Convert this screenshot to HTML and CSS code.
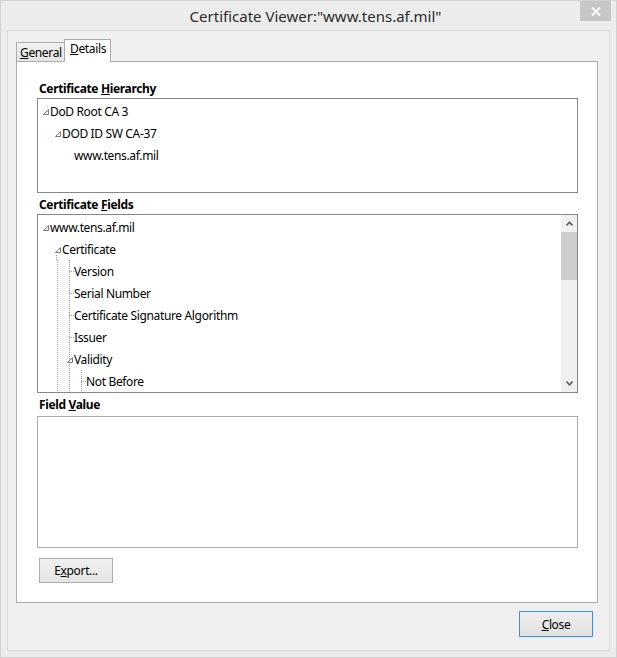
FILE: index.html
```html
<!DOCTYPE html>
<html>
<head>
<meta charset="utf-8">
<link rel="stylesheet" href="styles.css">
</head>
<body>
<div class="window">
  <div class="titlebar">
    <div class="title">Certificate Viewer:"www.tens.af.mil"</div>
    <div class="caption">
      <div class="close-x">
        <svg width="10" height="9" viewBox="0 0 10 9"><path d="M1 0.5 L9 8.5 M9 0.5 L1 8.5" stroke="#fff" stroke-width="1.8" fill="none"/></svg>
      </div>
    </div>
  </div>
  <div class="client">
    <div class="tabs">
      <div class="tab tab-general"><u>G</u>eneral</div>
      <div class="tab tab-details"><u>D</u>etails</div>
    </div>
    <div class="panel">
      <div class="label lbl-h">Certificate <u>H</u>ierarchy</div>
      <div class="box box-h">
        <div class="row"><span class="cell"><svg class="tri" width="6" height="6" viewBox="0 0 6 6"><path d="M0.5 5.5 L5.5 5.5 L5.5 0.5 Z" fill="#fff" stroke="#7a7a7a" stroke-width="1"/></svg></span><span class="txt">DoD Root CA 3</span></div>
        <div class="row"><span class="cell"></span><span class="cell"><svg class="tri" width="6" height="6" viewBox="0 0 6 6"><path d="M0.5 5.5 L5.5 5.5 L5.5 0.5 Z" fill="#fff" stroke="#7a7a7a" stroke-width="1"/></svg></span><span class="txt">DOD ID SW CA-37</span></div>
        <div class="row"><span class="cell"></span><span class="cell"></span><span class="cell"></span><span class="txt">www.tens.af.mil</span></div>
      </div>
      <div class="label lbl-f">Certificate <u>F</u>ields</div>
      <div class="box box-f">
        <div class="tree">
          <div class="row"><span class="cell"><svg class="tri" width="6" height="6" viewBox="0 0 6 6"><path d="M0.5 5.5 L5.5 5.5 L5.5 0.5 Z" fill="#fff" stroke="#7a7a7a" stroke-width="1"/></svg></span><span class="txt">www.tens.af.mil</span></div>
          <div class="row"><span class="cell"></span><span class="cell ln-low"><svg class="tri" width="6" height="6" viewBox="0 0 6 6"><path d="M0.5 5.5 L5.5 5.5 L5.5 0.5 Z" fill="#fff" stroke="#7a7a7a" stroke-width="1"/></svg></span><span class="txt">Certificate</span></div>
          <div class="row"><span class="cell"></span><span class="cell ln"></span><span class="cell tee"></span><span class="txt">Version</span></div>
          <div class="row"><span class="cell"></span><span class="cell ln"></span><span class="cell tee"></span><span class="txt">Serial Number</span></div>
          <div class="row"><span class="cell"></span><span class="cell ln"></span><span class="cell tee"></span><span class="txt">Certificate Signature Algorithm</span></div>
          <div class="row"><span class="cell"></span><span class="cell ln"></span><span class="cell tee"></span><span class="txt">Issuer</span></div>
          <div class="row"><span class="cell"></span><span class="cell ln"></span><span class="cell ln"><svg class="tri" width="6" height="6" viewBox="0 0 6 6"><path d="M0.5 5.5 L5.5 5.5 L5.5 0.5 Z" fill="#fff" stroke="#7a7a7a" stroke-width="1"/></svg></span><span class="txt">Validity</span></div>
          <div class="row"><span class="cell"></span><span class="cell ln"></span><span class="cell ln"></span><span class="cell tee"></span><span class="txt">Not Before</span></div>
        </div>
        <div class="scrollbar">
          <div class="sb-btn"><svg width="7" height="5" viewBox="0 0 7 5"><path d="M0.5 4.5 L3.5 1.2 L6.5 4.5" stroke="#606060" stroke-width="1.6" fill="none"/></svg></div>
          <div class="sb-track"><div class="sb-thumb"></div></div>
          <div class="sb-btn"><svg width="7" height="5" viewBox="0 0 7 5"><path d="M0.5 0.5 L3.5 3.8 L6.5 0.5" stroke="#606060" stroke-width="1.6" fill="none"/></svg></div>
        </div>
      </div>
      <div class="label lbl-v">Field <u>V</u>alue</div>
      <div class="box box-v"></div>
      <div class="btn btn-export">E<u>x</u>port...</div>
    </div>
    <div class="footer">
      <div class="btn btn-close"><u>C</u>lose</div>
    </div>
  </div>
</div>
</body>
</html>
```

FILE: styles.css
```css
html, body {
  margin: 0;
  padding: 0;
  background: #ececec;
}
body {
  font-family: "Noto Sans", "Open Sans", sans-serif;
  font-size: 12px;
  letter-spacing: -0.35px;
  color: #000;
}
.window {
  width: 617px;
  height: 658px;
  box-sizing: border-box;
  background: #ececec;
  border: 1px solid #d2d2d2;
  display: flex;
  flex-direction: column;
}
.titlebar {
  height: 29px;
  display: grid;
  grid-template-columns: 1fr auto 1fr;
  padding-left: 14px;
}
.title {
  grid-column: 2;
  font-size: 15px;
  letter-spacing: 0;
  line-height: 29px;
  color: #2b2b2b;
  padding-top: 1px;
}
.caption {
  grid-column: 3;
  display: flex;
  justify-content: flex-end;
  padding-right: 5px;
}
.close-x {
  width: 31px;
  height: 20px;
  background: #c7c7c7;
  display: flex;
  align-items: center;
  justify-content: center;
}
.client {
  margin: 0 6px;
  height: 621px;
  box-sizing: border-box;
  border: 1px solid #d9d9d9;
  background: #f0f0f0;
  padding: 8px 0 0 8px;
  display: flex;
  flex-direction: column;
}
.tabs {
  display: flex;
  align-items: flex-end;
  height: 22px;
}
.tab {
  box-sizing: border-box;
  border: 1px solid #acacac;
  border-bottom: none;
  line-height: 16px;
  white-space: nowrap;
}
.tab-general {
  width: 48px;
  height: 19px;
  border-right: none;
  background: linear-gradient(#f0f0f0, #e5e5e5);
  padding-left: 3px;
  padding-top: 2px;
}
.tab-details {
  width: 47px;
  height: 23px;
  background: #fff;
  margin-bottom: -1px;
  position: relative;
  z-index: 1;
  padding-left: 5px;
  padding-top: 1px;
}
.panel {
  width: 582px;
  height: 542px;
  box-sizing: border-box;
  border: 1px solid #acacac;
  background: #fff;
  padding: 16px 0 0 20px;
  display: flex;
  flex-direction: column;
}
.label {
  height: 18px;
  line-height: 22px;
  font-weight: bold;
  padding-left: 2px;
}
.lbl-h { margin-bottom: 2px; }
.lbl-f { margin-top: 1px; margin-bottom: 2px; }
.lbl-v { margin-bottom: 5px; line-height: 23px; }
.box {
  width: 541px;
  box-sizing: border-box;
  border: 1px solid #828790;
  background: #fff;
}
.box-h {
  height: 95px;
  padding-top: 1px;
}
.box-f {
  height: 179px;
  display: flex;
  padding-top: 1px;
}
.box-v {
  height: 132px;
  border-color: #abadb3;
}
.tree {
  flex: 1;
  overflow: hidden;
}
.row {
  display: flex;
  height: 22px;
  white-space: nowrap;
}
.cell {
  width: 12px;
  height: 22px;
  flex: none;
  display: flex;
  align-items: center;
  background-repeat: no-repeat;
}
.tri {
  margin-left: 5px;
  margin-top: 1px;
}
.ln {
  background-image: repeating-linear-gradient(to bottom, #a0a0a0 0 1px, transparent 1px 2px);
  background-size: 1px 100%;
  background-position: 7px 0;
}
.ln-low {
  background-image: repeating-linear-gradient(to bottom, #a0a0a0 0 1px, transparent 1px 2px);
  background-size: 1px 5px;
  background-position: 6px 17px;
}
.tee {
  background-image:
    repeating-linear-gradient(to bottom, #a0a0a0 0 1px, transparent 1px 2px),
    repeating-linear-gradient(to right, #a0a0a0 0 1px, transparent 1px 2px);
  background-size: 1px 100%, 5px 1px;
  background-position: 7px 0, 7px 11px;
}
.txt {
  line-height: 24px;
  height: 22px;
}
.scrollbar {
  width: 16px;
  margin-top: -1px;
  background: #f0f0f0;
  display: flex;
  flex-direction: column;
}
.sb-btn {
  height: 17px;
  display: flex;
  align-items: center;
  justify-content: center;
}
.sb-track {
  flex: 1;
}
.sb-thumb {
  height: 48px;
  background: #cdcdcd;
}
.btn {
  box-sizing: border-box;
  width: 74px;
  height: 25px;
  border: 1px solid #acacac;
  background: linear-gradient(#f0f0f0, #e5e5e5);
  display: flex;
  align-items: center;
  justify-content: center;
}
.btn-export {
  margin-top: 10px;
  margin-left: 2px;
}
.footer {
  display: flex;
  justify-content: flex-end;
  padding-right: 16px;
  padding-top: 8px;
}
.btn-close {
  height: 26px;
  border-color: #3c8ef0;
  background: linear-gradient(#ececec, #e2e2e2);
}
```
